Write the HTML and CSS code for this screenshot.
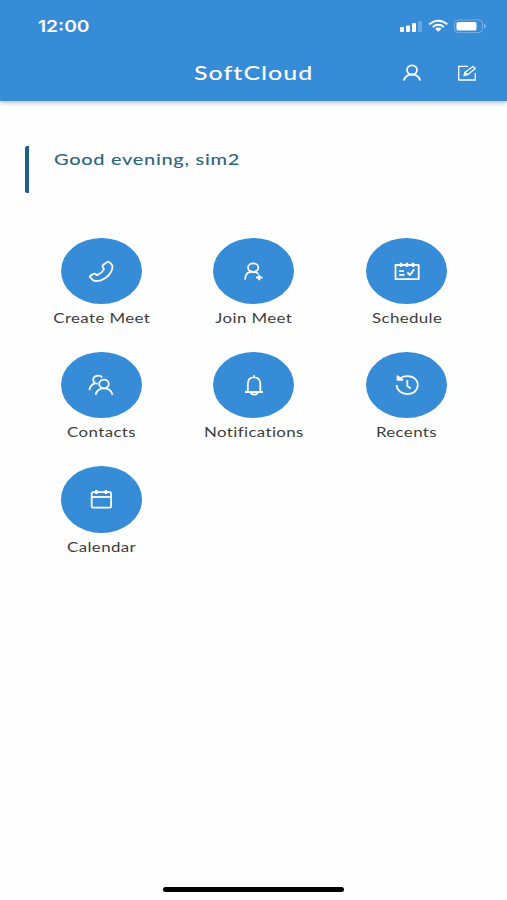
FILE: index.html
```
<!DOCTYPE html>
<html lang="en">
<head>
  <meta charset="UTF-8" />
  <meta name="viewport" content="width=device-width, initial-scale=1.0" />
  <title>SoftCloud</title>
  <link rel="stylesheet" href="styles.css">
</head>
<body>
  <header class="header">
    <div class="status">
      <span class="time"><span class="wide">12:00</span></span>
      <svg class="status-icons" width="88" height="16" viewBox="0 0 88 16">
        <g fill="#fff">
          <rect x="1" y="9" width="4" height="5" rx="1"/>
          <rect x="7" y="7.5" width="4" height="6.5" rx="1"/>
          <rect x="13" y="5" width="4" height="9" rx="1"/>
          <rect x="19" y="3" width="4" height="11" rx="1" opacity=".25"/>
          <path d="M36 10.6 Q39.3 8.6 42.6 10.6 L39.3 13.7Z"/>
          <rect x="57.5" y="4" width="20" height="8.5" rx="1.5"/>
          <path d="M85 6v4q2-.5 2-2t-2-2z" opacity=".4"/>
        </g>
        <g fill="none" stroke="#fff">
          <path d="M30.3 6.3Q39.3-.9 48.3 6.3M33.7 9Q39.3 4.6 44.9 9" stroke-width="2"/>
          <rect x="55.5" y="2" width="28" height="12.5" rx="3.5" opacity=".3"/>
        </g>
      </svg>
    </div>
    <div class="toolbar">
      <h1 class="title"><span class="wide">SoftCloud</span></h1>
      <div class="actions">
        <svg class="icon" width="20" height="18" viewBox="-10 -9 20 18">
          <ellipse cx="0" cy="-3" rx="5" ry="4.6"/>
          <path d="M-8.3 7.5C-7 3.5-4.5 1.5 0 1.5S7 3.5 8.3 7.5"/>
        </svg>
        <svg class="icon thin" width="20" height="18" viewBox="-10 -9 20 18">
          <path d="M1-6.7H-8.3V7H8.3V0"/>
          <path d="M-3 2.5L-2-.8 6-6.5 8.3-4.5.6 1.7ZM-2-.8L.6 1.7"/>
        </svg>
      </div>
    </div>
  </header>

  <main>
    <div class="greeting"><span class="wide">Good evening, sim2</span></div>

    <div class="menu">
      <div class="item">
        <div class="circle">
          <svg class="icon" width="28" height="24" viewBox="-14 -12 28 24">
            <path d="M2.2-6.2L6.3-9Q7.8-9.6 9.2-8.2L11.4-5.2Q11.8-1.5 8.6 3 5.2 7.6-.2 9.4-5.8 11-8 9.2L-11.2 5.8Q-11.2 5-10.4 4.6L-7.2 2.8Q-6.2 2.4-5.2 3.2L-3.8 4.2Q.8 2.4 3-1.6L1.6-4.2Q1.4-5.4 2.2-6.2Z"/>
          </svg>
        </div>
        <div class="label"><span class="wide">Create Meet</span></div>
      </div>
      <div class="item">
        <div class="circle">
          <svg class="icon" width="28" height="24" viewBox="-14 -12 28 24">
            <ellipse cx="-.8" cy="-3.4" rx="5.2" ry="4.2"/>
            <path d="M-9 8.5Q-8.6-.2-.6 .9 2.6 1 4.4 3"/>
            <path d="M5.2 3.7V9.3M2 6.5H8.4" stroke-width="2"/>
          </svg>
        </div>
        <div class="label"><span class="wide">Join Meet</span></div>
      </div>
      <div class="item">
        <div class="circle">
          <svg class="icon" width="28" height="24" viewBox="-14 -12 28 24">
            <path d="M-11.5-6H11.7V8.2H-11.5Z"/>
            <path d="M-6-8.3V-4M0-8.3V-4M6-8.3V-4" stroke-width="2.4"/>
            <path d="M-8 .2H-3M-8 3.8H-2.5M.4 1.5L3 4 7.2-1.8"/>
          </svg>
        </div>
        <div class="label"><span class="wide">Schedule</span></div>
      </div>
      <div class="item">
        <div class="circle">
          <svg class="icon" width="28" height="24" viewBox="-14 -12 28 24">
            <ellipse cx="3" cy="-1" rx="4.8" ry="4.3"/>
            <path d="M-5.3 9.7Q-4 3.3 3 3.3T11.5 9.7"/>
            <path d="M1.2-7.7C-1-10.3-7.8-9.8-7.8-5.3-7.8-3-6-1.3-3.3-1.3M-6.2-1.7Q-10.7-.2-11.7 5"/>
          </svg>
        </div>
        <div class="label"><span class="wide">Contacts</span></div>
      </div>
      <div class="item">
        <div class="circle">
          <svg class="icon" width="28" height="24" viewBox="-14 -12 28 24">
            <path d="M-6.2 6.5V-1.5Q-5.9-7.6 0-7.6T6.3-1.5V6.5M0-9.8V-7.6M-9 7H9"/>
            <path d="M-3.5 7Q-2.8 9.6 .2 9.6T3.8 7"/>
          </svg>
        </div>
        <div class="label"><span class="wide">Notifications</span></div>
      </div>
      <div class="item">
        <div class="circle">
          <svg class="icon" width="28" height="24" viewBox="-14 -12 28 24">
            <path d="M-8-5.6C-4-10 4.5-10 8.3-6 13.5-.5 10 9 .6 9-5.5 9-10 5.5-10.5 0"/>
            <path d="M-9.5-8.8V-5.2H-4.5Z" fill="#fff"/>
            <path d="M.3-5V1L3.8 3.5"/>
          </svg>
        </div>
        <div class="label"><span class="wide">Recents</span></div>
      </div>
      <div class="item">
        <div class="circle">
          <svg class="icon" width="28" height="24" viewBox="-14 -12 28 24">
            <rect x="-9.3" y="-6.8" width="19.4" height="15.5" rx="1.5"/>
            <path d="M-9.3-2H10"/>
            <path d="M-4.6-9V-5M4.9-9V-5" stroke-width="2.4"/>
          </svg>
        </div>
        <div class="label"><span class="wide">Calendar</span></div>
      </div>
    </div>
  </main>

  <div class="home-bar"></div>
</body>
</html>
```

FILE: styles.css
```
* {
  box-sizing: border-box;
}
body {
  margin: 0;
  height: 900px;
  display: flex;
  flex-direction: column;
  background: #fefefe;
  font-family: Lato, sans-serif;
  overflow: hidden;
}
.wide {
  display: inline-block;
  white-space: nowrap;
  transform: scaleX(1.25);
}
.header {
  height: 101px;
  background: #368cd7;
  color: #fff;
  box-shadow: 0 1px 5px rgba(60, 60, 90, 0.45);
}
.status {
  height: 50px;
  padding: 2px 20px 0 38px;
  display: flex;
  justify-content: space-between;
  align-items: center;
}
.time {
  font: 600 16px Inter, sans-serif;
}
.time .wide {
  transform-origin: left;
  transform: scaleX(1.2);
}
.toolbar {
  height: 45px;
  display: grid;
  grid-template-columns: 1fr auto 1fr;
  align-items: center;
}
.title {
  grid-column: 2;
  margin: 0;
  padding-bottom: 2px;
  font-size: 20px;
  font-weight: 500;
  letter-spacing: 0.8px;
}
.actions {
  display: flex;
  justify-content: flex-end;
  gap: 35px;
  padding-right: 30px;
}
.icon {
  fill: none;
  stroke: #fff;
  stroke-width: 1.8;
  stroke-linejoin: round;
}
.thin {
  stroke-width: 1.3;
}
main {
  flex: 1;
  padding: 45px 24px 0 25px;
}
.greeting {
  height: 47px;
  padding: 3px 0 0 25px;
  border-left: 4px solid #1d6285;
  border-radius: 2px;
  color: #2c6682;
  font-size: 16px;
  line-height: 20px;
  font-weight: 500;
  letter-spacing: 0.55px;
}
.greeting .wide {
  transform-origin: left;
}
.menu {
  display: grid;
  grid-template-columns: repeat(3, 1fr);
  grid-auto-rows: 114.3px;
  margin-top: 44.5px;
}
.item {
  display: flex;
  flex-direction: column;
  align-items: center;
}
.circle {
  width: 81px;
  height: 66.5px;
  border-radius: 50%;
  background: #368cd7;
  display: flex;
  align-items: center;
  justify-content: center;
}
.label {
  margin-top: 5px;
  color: #3d3d3d;
  font-size: 13.5px;
  line-height: 18px;
  letter-spacing: 0.3px;
}
.home-bar {
  width: 181px;
  height: 5px;
  margin: 0 auto 8px;
  border-radius: 3px;
  background: #000;
}
```
